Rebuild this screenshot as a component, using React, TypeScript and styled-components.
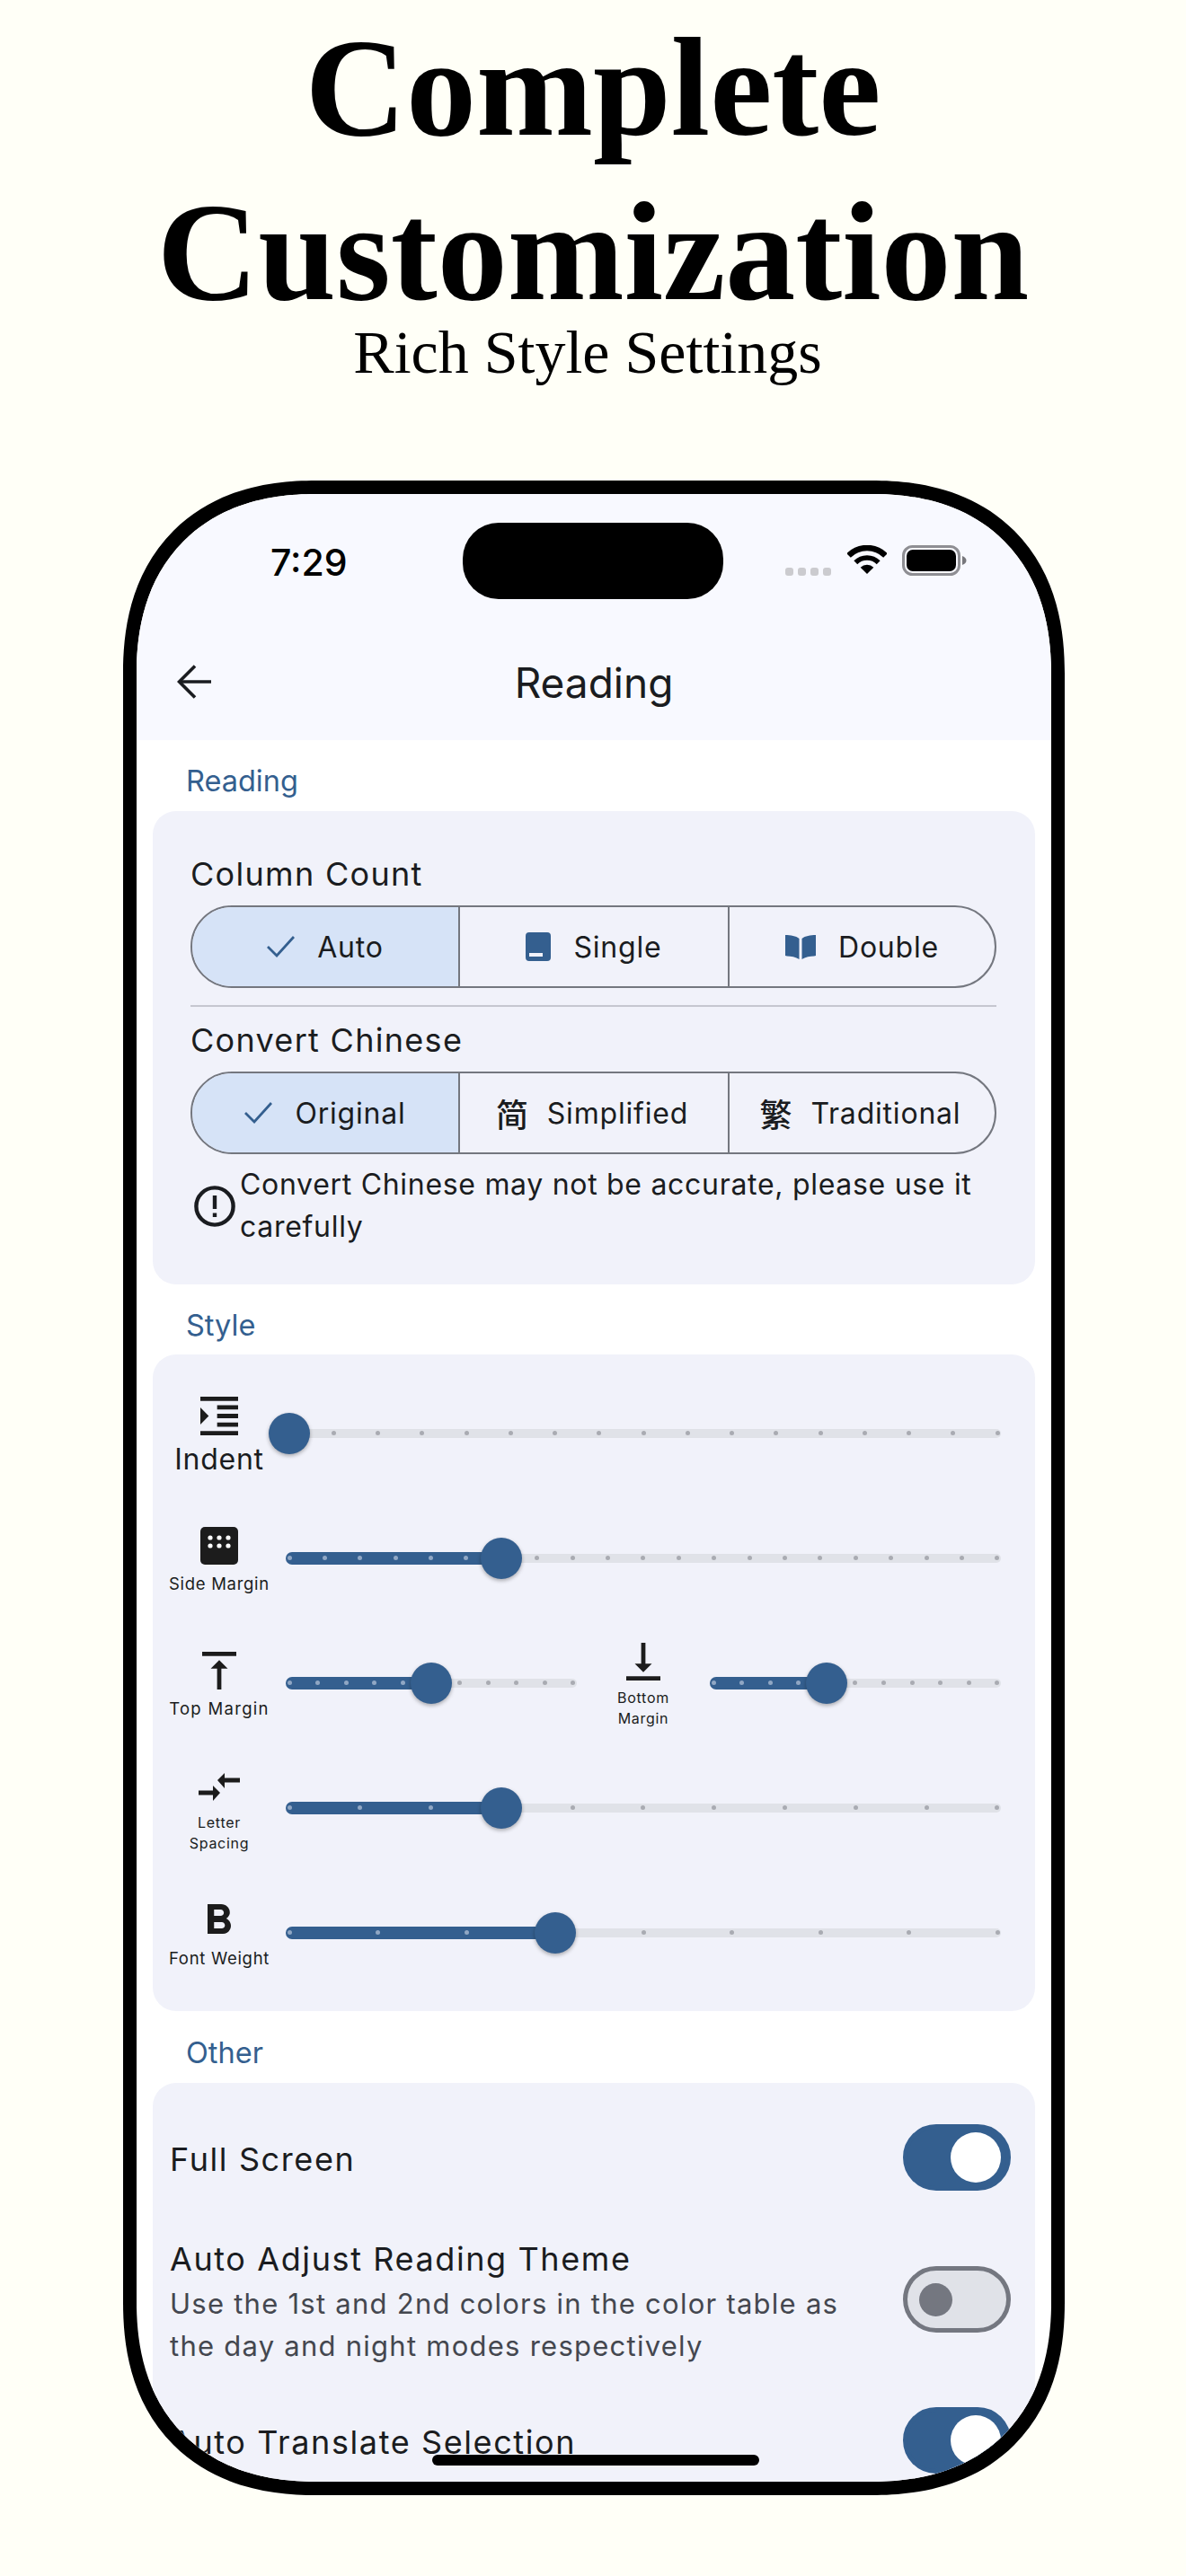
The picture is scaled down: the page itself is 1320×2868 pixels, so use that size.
import React from "react";
import styled, { createGlobalStyle } from "styled-components";

const primary = "#345f8f";

const GlobalStyle = createGlobalStyle`
  html, body {
    margin: 0;
    padding: 0;
    background: #fffff7;
  }
  body {
    width: 1320px;
    height: 2868px;
    overflow: hidden;
    font-family: Inter, "Noto Sans", sans-serif;
  }
`;

const Page = styled.div`
  width: 1320px;
  height: 2868px;
  padding-top: 6px;
  box-sizing: border-box;
  background: #fffff7;
`;

const Headline = styled.h1`
  margin: 0;
  font-family: "Liberation Serif", serif;
  font-size: 156px;
  line-height: 183px;
  font-weight: 700;
  color: #000;
  text-align: center;
`;

const Subline = styled.div`
  margin-top: -20px;
  padding-right: 12px;
  font-family: "Liberation Serif", serif;
  font-size: 68px;
  line-height: 80px;
  color: #000;
  text-align: center;
`;

const Phone = styled.div`
  position: relative;
  margin: 103px 0 0 137px;
  width: 1048px;
  height: 2243px;
  box-sizing: border-box;
  border: 15px solid #000;
  border-radius: 215px;
  corner-shape: superellipse(1.2);
  background: #fff;
  overflow: hidden;
`;

const Header = styled.div`
  height: 274px;
  box-sizing: border-box;
  padding-top: 32px;
  background: #f8f9ff;
`;

const StatusBar = styled.div`
  display: grid;
  grid-template-columns: 363px 290px 1fr;
  height: 85px;
  align-items: center;
`;

const Time = styled.div`
  padding-left: 149px;
  margin-top: 3px;
  font-size: 41px;
  font-weight: 500;
  color: #000;
`;

const Island = styled.div`
  height: 85px;
  background: #000;
  border-radius: 40px;
`;

const StatusIcons = styled.div`
  display: flex;
  align-items: center;
  padding-left: 69px;
  height: 85px;
`;

const SignalDots = styled.div`
  display: flex;
  gap: 5px;
  margin: 23px 18px 0 0;
`;

const SignalDot = styled.span`
  width: 9px;
  height: 9px;
  border-radius: 3px;
  background: #cbcbcf;
`;

const Wifi = styled.svg`
  width: 44px;
  height: 32px;
  margin: -3px 17px 0 0;
`;

const Battery = styled.svg`
  width: 72px;
  height: 34px;
  margin-top: -1px;
`;

const AppBar = styled.div`
  position: relative;
  margin-top: 43px;
  height: 100px;
  display: flex;
  align-items: center;
  justify-content: center;
`;

const BackButton = styled.svg`
  position: absolute;
  left: 45px;
  top: 30px;
  width: 38px;
  height: 38px;
`;

const AppTitle = styled.div`
  font-size: 46px;
  font-weight: 400;
  color: #1a1c20;
`;

const SectionLabel = styled.div<{ $top: number; $bottom: number }>`
  padding: ${(p) => p.$top}px 0 ${(p) => p.$bottom}px 55px;
  font-size: 32.5px;
  line-height: 40px;
  color: ${primary};
`;

const Card = styled.div`
  margin: 0 18px;
  background: #f1f2fa;
  border-radius: 26px;
`;

const ReadingCard = styled(Card)`
  padding: 48px 43px 41px 42px;
`;

const OptionTitle = styled.div`
  font-size: 36px;
  line-height: 44px;
  letter-spacing: 1.3px;
  color: #1a1c20;
`;

const Segments = styled.div`
  display: grid;
  grid-template-columns: 296px 300px 1fr;
  margin-top: 13px;
  height: 92px;
  box-sizing: border-box;
  border: 2px solid #74777f;
  border-radius: 46px;
  overflow: hidden;
`;

const Segment = styled.div<{ $active?: boolean }>`
  display: flex;
  align-items: center;
  justify-content: center;
  gap: 25px;
  font-size: 32px;
  letter-spacing: 0.8px;
  color: #1a1c20;
  background: ${(p) => (p.$active ? "#d6e3f7" : "transparent")};
  & + & {
    border-left: 2px solid #74777f;
  }
`;

const HanGlyph = styled.span`
  margin: 0 -5px 0 -4px;
  font-family: "Noto Sans CJK SC", sans-serif;
  font-size: 36px;
  font-weight: 500;
`;

const Divider = styled.div`
  height: 2px;
  margin: 19px 0 15px;
  background: #c6c7d0;
`;

const Note = styled.div`
  display: flex;
  align-items: center;
  gap: 5px;
  margin: 11px 0 0 4px;
  font-size: 32px;
  line-height: 46.5px;
  letter-spacing: 0.7px;
  color: #1a1c20;
`;

const NoteIcon = styled.svg`
  flex: none;
  width: 46px;
  height: 46px;
`;

const StyleCard = styled(Card)`
  padding: 18px 38px 18px 0;
`;

const SliderRow = styled.div`
  display: flex;
  align-items: center;
  height: 139px;
`;

const LabelCol = styled.div<{ $lift?: number }>`
  flex: none;
  width: 148px;
  padding-top: ${(p) => p.$lift ?? 7}px;
  display: flex;
  flex-direction: column;
  align-items: center;
  text-align: center;
  color: #1a1c20;
`;

const Caption = styled.div<{ $size: number; $line: number; $gap?: number; $track?: number }>`
  margin-top: ${(p) => p.$gap ?? 7}px;
  font-size: ${(p) => p.$size}px;
  line-height: ${(p) => p.$line}px;
  letter-spacing: ${(p) => p.$track ?? 0.7}px;
`;

const IconSvg = styled.svg`
  display: block;
  fill: #1c1c1c;
`;

const SliderBox = styled.div`
  position: relative;
  flex: 1;
  height: 46px;
  display: flex;
  align-items: center;
`;

const Rail = styled.div`
  width: 100%;
  height: 10px;
  border-radius: 5px;
  background: #e0e2e8;
`;

const Fill = styled.div<{ $ratio: number }>`
  position: absolute;
  left: 0;
  top: 16px;
  width: calc(4px + (100% - 8px) * ${(p) => p.$ratio});
  height: 14px;
  border-radius: 7px 0 0 7px;
  background: ${primary};
`;

const Ticks = styled.div`
  position: absolute;
  left: 1.5px;
  right: 1.5px;
  top: 20.5px;
  display: flex;
  justify-content: space-between;
`;

const Tick = styled.span<{ $on: boolean }>`
  width: 5px;
  height: 5px;
  border-radius: 50%;
  background: ${(p) => (p.$on ? "#90a7c4" : "#a9abb2")};
`;

const Thumb = styled.div<{ $ratio: number }>`
  position: absolute;
  top: 0;
  left: calc(4px + (100% - 8px) * ${(p) => p.$ratio} - 23px);
  width: 46px;
  height: 46px;
  border-radius: 50%;
  background: ${primary};
  box-shadow: 0 2px 4px rgba(0, 0, 0, 0.3);
`;

const OtherCard = styled(Card)`
  display: flex;
  flex-direction: column;
  padding: 46px 27px 0 19px;
  height: 700px;
  box-sizing: border-box;
  border-radius: 26px 26px 0 0;
`;

const SwitchRow = styled.div<{ $gap: number }>`
  display: flex;
  align-items: center;
  justify-content: space-between;
  margin-bottom: ${(p) => p.$gap}px;
`;

const SwitchText = styled.div`
  width: 775px;
`;

const SwitchTitle = styled.div<{ $top?: number }>`
  padding-top: ${(p) => p.$top ?? 4}px;
  font-size: 36px;
  line-height: 44px;
  letter-spacing: 1.6px;
  color: #1a1c20;
`;

const SwitchHint = styled.div`
  margin-top: 5px;
  font-size: 31px;
  line-height: 46.5px;
  letter-spacing: 1.25px;
  color: #44474f;
`;

const Toggle = styled.div<{ $on: boolean }>`
  flex: none;
  width: 120px;
  height: 74px;
  box-sizing: border-box;
  display: flex;
  align-items: center;
  justify-content: ${(p) => (p.$on ? "flex-end" : "flex-start")};
  padding: ${(p) => (p.$on ? "0 6px" : "0 13px")};
  border-radius: 37px;
  border: 5px solid ${(p) => (p.$on ? primary : "#747780")};
  background: ${(p) => (p.$on ? primary : "#e0e2e8")};
`;

const ToggleKnob = styled.span<{ $on: boolean }>`
  width: ${(p) => (p.$on ? 56 : 37)}px;
  height: ${(p) => (p.$on ? 56 : 37)}px;
  border-radius: 50%;
  background: ${(p) => (p.$on ? "#fff" : "#747780")};
`;

const HomeBar = styled.div`
  position: absolute;
  left: 329px;
  bottom: 18px;
  width: 364px;
  height: 12px;
  border-radius: 6px;
  background: #000;
`;

const CheckMark = styled.svg`
  flex: none;
  width: 31px;
  height: 24px;
  fill: none;
  stroke: ${primary};
  stroke-width: 2.8;
`;

function Check() {
  return (
    <CheckMark viewBox="0 0 31 24">
      <path d="M1 12 L11 22 L30 1" />
    </CheckMark>
  );
}

function Slider({ divisions, value }: { divisions: number; value: number }) {
  const ratio = value / divisions;
  return (
    <SliderBox>
      <Rail />
      {value > 0 && <Fill $ratio={ratio} />}
      <Ticks>
        {Array.from({ length: divisions + 1 }, (_, i) => (
          <Tick key={i} $on={i < value} />
        ))}
      </Ticks>
      <Thumb $ratio={ratio} />
    </SliderBox>
  );
}

function Switch({ on }: { on: boolean }) {
  return (
    <Toggle $on={on}>
      <ToggleKnob $on={on} />
    </Toggle>
  );
}

export default function App() {
  return (
    <Page>
      <GlobalStyle />
      <Headline>
        Complete
        <br />
        Customization
      </Headline>
      <Subline>Rich Style Settings</Subline>

      <Phone>
        <Header>
          <StatusBar>
            <Time>7:29</Time>
            <Island />
            <StatusIcons>
              <SignalDots>
                <SignalDot />
                <SignalDot />
                <SignalDot />
                <SignalDot />
              </SignalDots>
              <Wifi viewBox="0 0 44 32">
                <g fill="none" stroke="#000">
                  <path d="M1.5 11.5 A29 29 0 0 1 42.5 11.5" strokeWidth="6.5" />
                  <path d="M9.3 19.3 A18 18 0 0 1 34.7 19.3" strokeWidth="5.5" />
                </g>
                <path d="M14.7 24.7 A10.3 10.3 0 0 1 29.3 24.7 L22 32 Z" fill="#000" />
              </Wifi>
              <Battery viewBox="0 0 72 34">
                <rect x="1.5" y="1.5" width="62" height="31" rx="10" fill="none" stroke="#8e8e93" strokeWidth="3" />
                <rect x="5" y="5" width="55" height="24" rx="7" fill="#000" />
                <path d="M67 12 C70 13 71.5 15 71.5 17 C71.5 19 70 21 67 22 Z" fill="#77777c" />
              </Battery>
            </StatusIcons>
          </StatusBar>
          <AppBar>
            <BackButton viewBox="0 0 38 38" fill="none" stroke="#1a1c20" strokeWidth="3.6">
              <path d="M38 19 H3" />
              <path d="M20 1.5 L2.5 19 L20 36.5" />
            </BackButton>
            <AppTitle>Reading</AppTitle>
          </AppBar>
        </Header>

        <SectionLabel $top={26} $bottom={13}>Reading</SectionLabel>
        <ReadingCard>
          <OptionTitle>Column Count</OptionTitle>
          <Segments>
            <Segment $active>
              <Check />
              Auto
            </Segment>
            <Segment>
              <svg width="28" height="32" viewBox="0 0 28 32">
                <path
                  d="M4 0 H24 A4 4 0 0 1 28 4 V28 A4 4 0 0 1 24 32 H4 A4 4 0 0 1 0 28 V4 A4 4 0 0 1 4 0 Z M4 23 V27 H19 V23 Z"
                  fill={primary}
                  fillRule="evenodd"
                />
              </svg>
              Single
            </Segment>
            <Segment>
              <svg width="34" height="28" viewBox="0 0 34 28">
                <path d="M0 1 C6 1 12 2 15.5 5 V28 C12 25.5 6 24.5 2 24.5 L0 24 Z" fill={primary} />
                <path d="M34 1 C28 1 22 2 18.5 5 V28 C22 25.5 28 24.5 32 24.5 L34 24 Z" fill={primary} />
              </svg>
              Double
            </Segment>
          </Segments>
          <Divider />
          <OptionTitle>Convert Chinese</OptionTitle>
          <Segments>
            <Segment $active>
              <Check />
              Original
            </Segment>
            <Segment>
              <HanGlyph>简</HanGlyph>
              Simplified
            </Segment>
            <Segment>
              <HanGlyph>繁</HanGlyph>
              Traditional
            </Segment>
          </Segments>
          <Note>
            <NoteIcon viewBox="0 0 46 46" fill="none" stroke="#1a1c20" strokeWidth="4.4">
              <circle cx="23" cy="23" r="20.6" />
              <path d="M23 11 V26" />
              <path d="M23 30.5 V35" />
            </NoteIcon>
            <span>Convert Chinese may not be accurate, please use it carefully</span>
          </Note>
        </ReadingCard>

        <SectionLabel $top={26} $bottom={12}>Style</SectionLabel>
        <StyleCard>
          <SliderRow>
            <LabelCol>
              <IconSvg width="42" height="43" viewBox="3 3 18 18" preserveAspectRatio="none">
                <path d="M3 21h18v-2H3v2zM3 8v8l4-4-4-4zm8 9h10v-2H11v2zM3 3v2h18V3H3zm8 6h10V7H11v2zm0 4h10v-2H11v2z" />
              </IconSvg>
              <Caption $size={32} $line={38} $gap={8}>Indent</Caption>
            </LabelCol>
            <Slider divisions={16} value={0} />
          </SliderRow>
          <SliderRow>
            <LabelCol>
              <IconSvg width="42" height="42" viewBox="0 0 42 42">
                <rect width="42" height="42" rx="5" />
                <g fill="#fff">
                  <circle cx="11" cy="12" r="2.6" />
                  <circle cx="21" cy="12" r="2.6" />
                  <circle cx="31" cy="12" r="2.6" />
                  <circle cx="11" cy="21" r="2.6" />
                  <circle cx="21" cy="21" r="2.6" />
                  <circle cx="31" cy="21" r="2.6" />
                </g>
              </IconSvg>
              <Caption $size={18.5} $line={28}>Side Margin</Caption>
            </LabelCol>
            <Slider divisions={20} value={6} />
          </SliderRow>
          <SliderRow>
            <LabelCol>
              <IconSvg width="38" height="42" viewBox="4 3 16 18" preserveAspectRatio="none">
                <path d="M8 11h3v10h2V11h3l-4-4-4 4zM4 3v2h16V3H4z" />
              </IconSvg>
              <Caption $size={18.5} $line={28} $track={1.3}>Top Margin</Caption>
            </LabelCol>
            <Slider divisions={10} value={5} />
            <LabelCol>
              <IconSvg width="38" height="42" viewBox="4 3 16 18" preserveAspectRatio="none">
                <path d="M16 13h-3V3h-2v10H8l4 4 4-4zM4 19v2h16v-2H4z" />
              </IconSvg>
              <Caption $size={16} $line={23} $gap={8}>
                Bottom
                <br />
                Margin
              </Caption>
            </LabelCol>
            <Slider divisions={10} value={4} />
          </SliderRow>
          <SliderRow>
            <LabelCol $lift={12}>
              <IconSvg width="46" height="31" viewBox="0 0 46 31">
                <path d="M21 8 L29 0 V5.5 H46 V10.5 H29 V17 Z" />
                <path d="M24 22 L16 14 V19.5 H0 V24.5 H16 V31 Z" />
              </IconSvg>
              <Caption $size={16} $line={23} $gap={13}>
                Letter
                <br />
                Spacing
              </Caption>
            </LabelCol>
            <Slider divisions={10} value={3} />
          </SliderRow>
          <SliderRow>
            <LabelCol $lift={10}>
              <IconSvg width="26" height="33" viewBox="7 4 10.75 14" preserveAspectRatio="none">
                <path d="M15.6 10.79c.97-.67 1.65-1.77 1.65-2.79 0-2.26-1.75-4-4-4H7v14h7.04c2.09 0 3.71-1.7 3.71-3.79 0-1.52-.86-2.82-2.15-3.42zM10 6.5h3c.83 0 1.5.67 1.5 1.5s-.67 1.5-1.5 1.5h-3v-3zm3.5 9H10v-3h3.5c.83 0 1.5.67 1.5 1.5s-.67 1.5-1.5 1.5z" />
              </IconSvg>
              <Caption $size={18.5} $line={28} $gap={13}>Font Weight</Caption>
            </LabelCol>
            <Slider divisions={8} value={3} />
          </SliderRow>
        </StyleCard>

        <SectionLabel $top={27} $bottom={13}>Other</SectionLabel>
        <OtherCard>
          <SwitchRow $gap={46}>
            <SwitchText>
              <SwitchTitle>Full Screen</SwitchTitle>
            </SwitchText>
            <Switch on />
          </SwitchRow>
          <SwitchRow $gap={45}>
            <SwitchText>
              <SwitchTitle $top={8}>Auto Adjust Reading Theme</SwitchTitle>
              <SwitchHint>
                Use the 1st and 2nd colors in the color table as the day and night modes respectively
              </SwitchHint>
            </SwitchText>
            <Switch on={false} />
          </SwitchRow>
          <SwitchRow $gap={0}>
            <SwitchText>
              <SwitchTitle>Auto Translate Selection</SwitchTitle>
            </SwitchText>
            <Switch on />
          </SwitchRow>
        </OtherCard>
        <HomeBar />
      </Phone>
    </Page>
  );
}
